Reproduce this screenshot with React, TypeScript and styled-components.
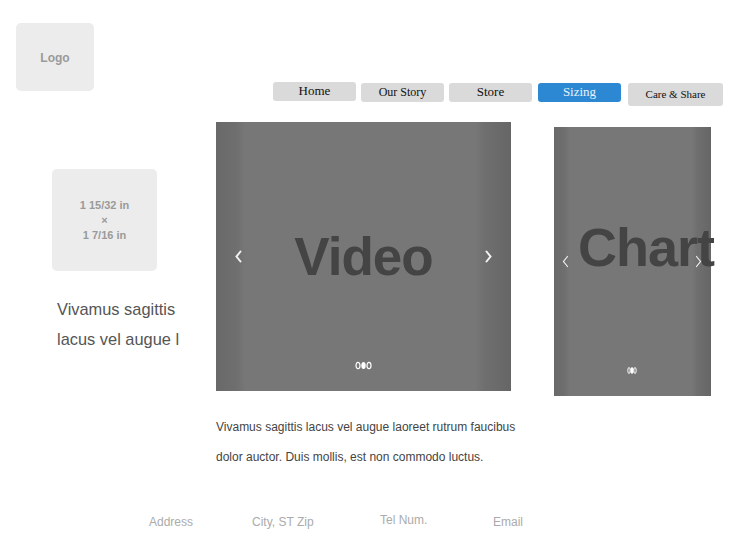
import * as React from 'react'
import styled, { createGlobalStyle } from 'styled-components'

const GlobalStyle = createGlobalStyle`
  html, body {
    margin: 0;
    padding: 0;
    background: #ffffff;
  }

  body {
    font-family: "Liberation Sans", Arial, sans-serif;
  }
`

const Page = styled.div`
  width: 756px;
  height: 554px;
  overflow: hidden;
  position: relative;
`

const Header = styled.header`
  display: flex;
  align-items: flex-start;
  padding: 23px 0 0 16px;
  height: 122px;
  box-sizing: border-box;
`

const Placeholder = styled.div<{ w: number; h: number }>`
  width: ${ p => p.w }px;
  height: ${ p => p.h }px;
  background: #ececec;
  border-radius: 5px;
  display: flex;
  flex-direction: column;
  align-items: center;
  justify-content: center;
  color: #9a9a9a;
  font-weight: bold;
  font-size: 11px;
  line-height: 15px;
`

const LogoText = styled.span`
  font-size: 12px;
  margin-top: 2px;
`

const Nav = styled.nav`
  display: flex;
  align-items: flex-start;
  margin: 59px 0 0 179px;
`

const NavButton = styled.a<{ active?: boolean; w: number; h: number; top: number; gap: number; size: number }>`
  width: ${ p => p.w }px;
  height: ${ p => p.h }px;
  margin-top: ${ p => p.top }px;
  margin-right: ${ p => p.gap }px;
  border-radius: 3px;
  background: ${ p => p.active ? '#2c88d2' : '#dadada' };
  color: ${ p => p.active ? '#e8f1fa' : '#111111' };
  font-family: "Liberation Serif", "Times New Roman", serif;
  font-size: ${ p => p.size }px;
  display: flex;
  align-items: center;
  justify-content: center;
  text-decoration: none;
  box-sizing: border-box;
  padding-bottom: 1px;
`

const Main = styled.main`
  display: flex;
  align-items: flex-start;
`

const SideColumn = styled.aside`
  width: 216px;
  padding: 47px 0 0 52px;
  box-sizing: border-box;
`

const SideText = styled.p`
  margin: 23px 0 0 5px;
  font-size: 16.4px;
  line-height: 30px;
  color: #555555;
  white-space: nowrap;
`

const CenterColumn = styled.section`
  width: 295px;
`

const Carousel = styled.div<{ w: number; h: number; lift: number; shift: number }>`
  position: relative;
  width: ${ p => p.w }px;
  height: ${ p => p.h }px;
  background: linear-gradient(
    to right,
    #696969 0%,
    #6f6f6f 7%,
    #777777 10%,
    #777777 88%,
    #6f6f6f 91%,
    #666666 100%
  );
  display: flex;
  align-items: center;
  justify-content: ${ p => p.shift ? 'flex-start' : 'center' };
  padding-left: ${ p => p.shift }px;
  padding-bottom: ${ p => p.lift }px;
  box-sizing: border-box;
`

const SlideLabel = styled.span<{ size: number }>`
  font-size: ${ p => p.size }px;
  font-weight: bold;
  letter-spacing: -1px;
  color: #444444;
  white-space: nowrap;
  line-height: 1;
`

const Arrow = styled.svg<{ side: 'left' | 'right'; offset: number; y: number }>`
  position: absolute;
  ${ p => p.side }: ${ p => p.offset }px;
  top: ${ p => p.y }px;
`

const Dots = styled.svg<{ x: number; y: number }>`
  position: absolute;
  left: ${ p => p.x }px;
  top: ${ p => p.y }px;
`

const Caption = styled.p`
  margin: 21px 0 0;
  font-size: 12px;
  line-height: 30px;
  color: #444444;
  white-space: nowrap;
`

const RightColumn = styled.section`
  margin: 5px 0 0 43px;
`

const Footer = styled.footer`
  display: flex;
  align-items: flex-start;
  padding-left: 149px;
  margin-top: 43px;
  font-size: 12px;
  color: #ababab;
`

const FooterItem = styled.span<{ w: number; up?: boolean }>`
  width: ${ p => p.w }px;
  margin-top: ${ p => p.up ? -2 : 0 }px;
  white-space: nowrap;
`

const navItems = [
  { label: 'Home', w: 83, h: 19, top: 0, gap: 5, size: 13 },
  { label: 'Our Story', w: 83, h: 19, top: 1, gap: 5, size: 12 },
  { label: 'Store', w: 83, h: 19, top: 1, gap: 6, size: 13 },
  { label: 'Sizing', w: 83, h: 19, top: 1, gap: 7, size: 13, active: true },
  { label: 'Care & Share', w: 95, h: 23, top: 1, gap: 0, size: 11 },
]

const Chevron = ({ side, offset, y, bold }: { side: 'left' | 'right'; offset: number; y: number; bold?: boolean }) => (
  <Arrow side={ side } offset={ offset } y={ y } width="7" height="13" viewBox="0 0 7 13">
    <polyline
      points={ side === 'left' ? '5.5,1.5 1.5,6.5 5.5,11.5' : '1.5,1.5 5.5,6.5 1.5,11.5' }
      fill="none"
      stroke="#f2f2f2"
      strokeWidth={ bold ? 2 : 1.2 }
      strokeLinecap="round"
    />
  </Arrow>
)

const App = () => (
  <Page>
    <GlobalStyle />
    <Header>
      <Placeholder w={ 78 } h={ 68 }>
        <LogoText>Logo</LogoText>
      </Placeholder>
      <Nav>
        { navItems.map(item => (
          <NavButton
            key={ item.label }
            href="#"
            active={ item.active }
            w={ item.w }
            h={ item.h }
            top={ item.top }
            gap={ item.gap }
            size={ item.size }
          >
            { item.label }
          </NavButton>
        )) }
      </Nav>
    </Header>

    <Main>
      <SideColumn>
        <Placeholder w={ 105 } h={ 102 }>
          <span>1 15/32 in</span>
          <span>×</span>
          <span>1 7/16 in</span>
        </Placeholder>
        <SideText>
          Vivamus sagittis<br />
          lacus vel augue l
        </SideText>
      </SideColumn>

      <CenterColumn>
        <Carousel w={ 295 } h={ 269 } lift={ 0 } shift={ 0 }>
          <SlideLabel size={ 53 }>Video</SlideLabel>
          <Chevron side="left" offset={ 19 } y={ 128 } bold />
          <Chevron side="right" offset={ 19 } y={ 128 } bold />
          <Dots x={ 139 } y={ 239 } width="18" height="9" viewBox="0 0 18 9">
            <ellipse cx="3" cy="4.5" rx="2" ry="3.2" fill="none" stroke="#fff" strokeWidth="1.2" />
            <ellipse cx="8.5" cy="4.5" rx="2.2" ry="3.5" fill="#fff" />
            <ellipse cx="14" cy="4.5" rx="2" ry="3.2" fill="none" stroke="#fff" strokeWidth="1.2" />
          </Dots>
        </Carousel>
        <Caption>
          Vivamus sagittis lacus vel augue laoreet rutrum faucibus<br />
          dolor auctor. Duis mollis, est non commodo luctus.
        </Caption>
      </CenterColumn>

      <RightColumn>
        <Carousel w={ 157 } h={ 269 } lift={ 29 } shift={ 24 }>
          <SlideLabel size={ 54 }>Chart</SlideLabel>
          <Chevron side="left" offset={ 8 } y={ 128 } />
          <Chevron side="right" offset={ 9 } y={ 128 } />
          <Dots x={ 73 } y={ 239 } width="10" height="9" viewBox="0 0 10 9">
            <ellipse cx="2" cy="4.5" rx="1.2" ry="3" fill="none" stroke="#fff" strokeWidth="1" />
            <ellipse cx="5" cy="4.5" rx="1.6" ry="3.3" fill="#fff" />
            <ellipse cx="8" cy="4.5" rx="1.2" ry="3" fill="none" stroke="#fff" strokeWidth="1" />
          </Dots>
        </Carousel>
      </RightColumn>
    </Main>

    <Footer>
      <FooterItem w={ 103 }>Address</FooterItem>
      <FooterItem w={ 128 }>City, ST Zip</FooterItem>
      <FooterItem w={ 113 } up>Tel Num.</FooterItem>
      <FooterItem w={ 60 }>Email</FooterItem>
    </Footer>
  </Page>
)

export default App
